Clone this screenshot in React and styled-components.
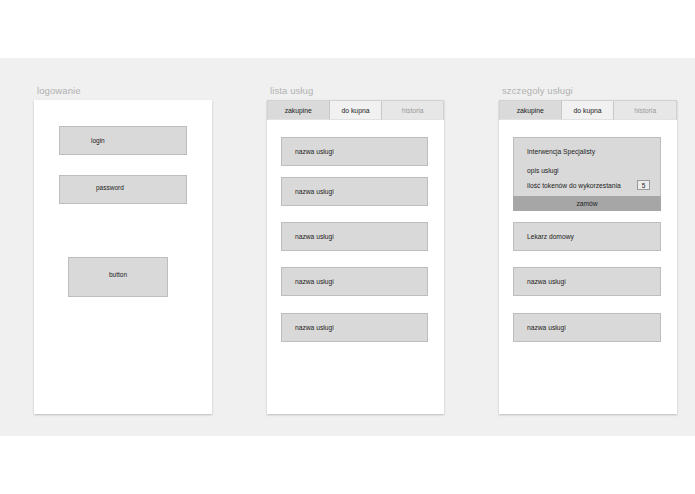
import React from 'react';
import styled, { createGlobalStyle } from 'styled-components';

const GlobalStyle = createGlobalStyle`
  body {
    margin: 0;
    background: #ffffff;
    font-family: "Liberation Sans", Arial, sans-serif;
  }
`;

const Page = styled.div`
  width: 695px;
  height: 494px;
  padding-top: 58px;
  box-sizing: border-box;
  background: #fff;
`;

const Band = styled.div`
  height: 378px;
  background: #f0f0f0;
  box-sizing: border-box;
  padding: 27px 0 0 34px;
  display: flex;
  gap: 55px;
`;

const Column = styled.div`
  width: ${props => props.$width}px;
  display: flex;
  flex-direction: column;
`;

const ScreenLabel = styled.div`
  font-size: 9.5px;
  line-height: 11px;
  height: 15px;
  color: #b0b0b0;
  padding-left: 3px;
  letter-spacing: 0.1px;
`;

const Card = styled.div`
  height: 314px;
  background: #fff;
  box-shadow: 0 1px 2px rgba(0, 0, 0, 0.22);
  display: flex;
  flex-direction: column;
`;

const LoginBody = styled.div`
  padding: 26px 0 0 25px;
  display: flex;
  flex-direction: column;
`;

const Field = styled.div`
  width: 128px;
  height: 29px;
  box-sizing: border-box;
  background: #d9d9d9;
  border: 1px solid #bdbdbd;
  margin-top: ${props => props.$space || 0}px;
  padding-left: ${props => props.$indent}px;
  padding-bottom: ${props => props.$lift || 0}px;
  display: flex;
  align-items: center;
  font-size: 6.5px;
  color: #222;
`;

const Button = styled.div`
  width: 100px;
  height: 40px;
  box-sizing: border-box;
  margin: 53px 0 0 9px;
  padding-bottom: 6px;
  background: #d9d9d9;
  border: 1px solid #bdbdbd;
  display: flex;
  align-items: center;
  justify-content: center;
  font-size: 6.5px;
  color: #222;
`;

const Tabs = styled.div`
  height: 20px;
  display: flex;
  box-sizing: border-box;
  border: 1px solid #d2d2d2;
  border-bottom: none;
`;

const Tab = styled.div`
  width: ${props => props.$width}px;
  background: ${props => props.$bg};
  color: ${props => props.$muted ? '#9a9a9a' : '#222'};
  border-right: ${props => props.$last ? 'none' : '1px solid #c8c8c8'};
  border-bottom: 1px solid #e2e2e2;
  display: flex;
  align-items: center;
  justify-content: center;
  font-size: 6.8px;
`;

const ListBody = styled.div`
  padding: 0 0 0 14px;
  display: flex;
  flex-direction: column;
`;

const Item = styled.div`
  width: ${props => props.$width}px;
  height: 29px;
  box-sizing: border-box;
  margin-top: ${props => props.$space}px;
  background: #d9d9d9;
  border: 1px solid #bdbdbd;
  padding-left: ${props => props.$indent}px;
  display: flex;
  align-items: center;
  font-size: 6.7px;
  color: #222;
`;

const Expanded = styled.div`
  width: 148px;
  height: 74px;
  box-sizing: border-box;
  margin-top: 17px;
  background: #d9d9d9;
  border: 1px solid #bdbdbd;
  border-bottom: none;
  display: flex;
  flex-direction: column;
`;

const DetailText = styled.div`
  font-size: 6.7px;
  color: #222;
  padding-left: 13px;
  height: ${props => props.$h}px;
  display: flex;
  align-items: center;
  justify-content: space-between;
  padding-right: 10px;
`;

const TokenBox = styled.span`
  width: 13px;
  height: 10px;
  box-sizing: border-box;
  border: 1px solid #9a9a9a;
  background: #ececec;
  display: flex;
  align-items: center;
  justify-content: center;
  font-size: 6.5px;
`;

const OrderBar = styled.div`
  margin: auto -1px 0;
  height: 15px;
  background: #a6a6a6;
  display: flex;
  align-items: center;
  justify-content: center;
  font-size: 6.7px;
  color: #222;
`;

const listItems = [
  { name: 'nazwa usługi', space: 17 },
  { name: 'nazwa usługi', space: 11 },
  { name: 'nazwa usługi', space: 16 },
  { name: 'nazwa usługi', space: 16 },
  { name: 'nazwa usługi', space: 17 },
];

const detailItems = [
  { name: 'Lekarz domowy', space: 11 },
  { name: 'nazwa usługi', space: 16 },
  { name: 'nazwa usługi', space: 17 },
];

const TabBar = ({ widths }) => (
  <Tabs>
    <Tab $width={widths[0]} $bg="#dadada">zakupine</Tab>
    <Tab $width={widths[1]} $bg="#f1f1f1">do kupna</Tab>
    <Tab $width={widths[2]} $bg="#e7e7e7" $muted $last>historia</Tab>
  </Tabs>
);

const App = () => {
  return (
    <Page>
      <GlobalStyle />
      <Band>
        <Column $width={178}>
          <ScreenLabel>logowanie</ScreenLabel>
          <Card>
            <LoginBody>
              <Field $indent={31}>login</Field>
              <Field $indent={36} $space={20} $lift={5}>password</Field>
              <Button>button</Button>
            </LoginBody>
          </Card>
        </Column>

        <Column $width={177}>
          <ScreenLabel>lista usług</ScreenLabel>
          <Card>
            <TabBar widths={[62, 53, 62]} />
            <ListBody>
              {listItems.map((it, i) => (
                <Item key={i} $width={147} $space={it.space} $indent={13}>{it.name}</Item>
              ))}
            </ListBody>
          </Card>
        </Column>

        <Column $width={178}>
          <ScreenLabel>szczegoly usługi</ScreenLabel>
          <Card>
            <TabBar widths={[62, 53, 63]} />
            <ListBody>
              <Expanded>
                <DetailText $h={27}>Interwencja Specjalisty</DetailText>
                <DetailText $h={10}>opis usługi</DetailText>
                <DetailText $h={20}>
                  ilość tokenów do wykorzestania
                  <TokenBox>5</TokenBox>
                </DetailText>
                <OrderBar>zamów</OrderBar>
              </Expanded>
              {detailItems.map((it, i) => (
                <Item key={i} $width={148} $space={it.space} $indent={13}>{it.name}</Item>
              ))}
            </ListBody>
          </Card>
        </Column>
      </Band>
    </Page>
  );
};

export default App;
